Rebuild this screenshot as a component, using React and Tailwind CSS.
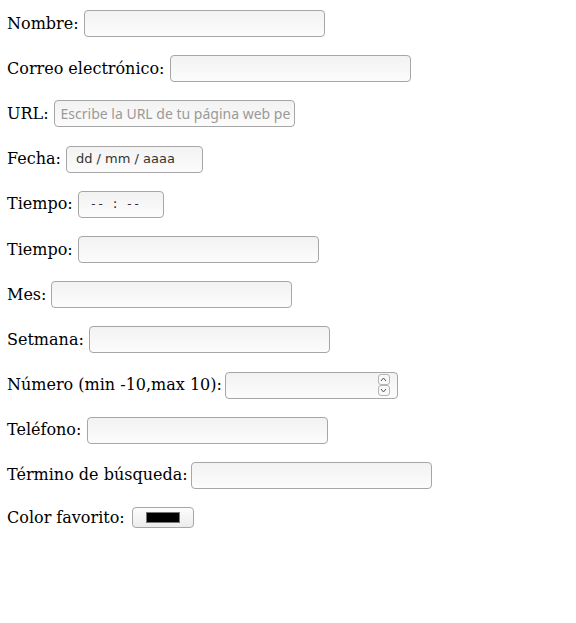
import React from "react";

const field =
  "h-[27px] w-[241px] rounded-[4px] border border-[#a6a6a6] bg-gradient-to-b from-[#f2f2f2] to-[#fcfcfc] outline-none";

const Row = ({ label, gap = "gap-[5px]", tall = "h-[29.2px]", children }) => (
  <div className={`flex ${tall} items-center ${gap}`}>
    <span>{label}</span>
    {children}
  </div>
);

const App = () => {
  return (
    <div className="flex flex-col gap-4 bg-white pl-[7px] pt-[9px] text-[16px] text-black font-['DejaVu_Serif',serif]">
      <Row label="Nombre:">
        <div className={field} />
      </Row>
      <Row label="Correo electrónico:">
        <div className={field} />
      </Row>
      <Row label="URL:">
        <div className={`${field} flex items-center overflow-hidden whitespace-nowrap pl-[6px] text-[14px] text-[#9a9a9a] font-['Noto_Sans',sans-serif]`}>
          Escribe la URL de tu página web pe
        </div>
      </Row>
      <Row label="Fecha:">
        <div className={`${field} !w-[137px] flex items-center pl-[9px] text-[13px] text-[#333] font-['DejaVu_Sans',sans-serif]`}>
          dd / mm / aaaa
        </div>
      </Row>
      <Row label="Tiempo:">
        <div className={`${field} !w-[86px] flex items-center pl-[11px] text-[12px] text-[#333] font-['DejaVu_Sans_Mono',monospace]`}>
          -- : --
        </div>
      </Row>
      <Row label="Tiempo:">
        <div className={field} />
      </Row>
      <Row label="Mes:">
        <div className={field} />
      </Row>
      <Row label="Setmana:">
        <div className={field} />
      </Row>
      <Row label="Número (min -10,max 10):" gap="gap-[3px]">
        <div className={`${field} !w-[173px] flex items-center justify-end pr-[7px]`}>
          <div className="flex flex-col">
            <div className="flex h-[11px] w-[12px] items-center justify-center rounded-[3px] border border-[#b5b5b5] bg-[#f8f8f8]">
              <svg width="7" height="5" viewBox="0 0 7 5">
                <path d="M1 4 L3.5 1 L6 4" fill="none" stroke="#555" strokeWidth="1" />
              </svg>
            </div>
            <div className="flex h-[11px] w-[12px] items-center justify-center rounded-[3px] border border-[#b5b5b5] bg-[#f8f8f8]">
              <svg width="7" height="5" viewBox="0 0 7 5">
                <path d="M1 1 L3.5 4 L6 1" fill="none" stroke="#555" strokeWidth="1" />
              </svg>
            </div>
          </div>
        </div>
      </Row>
      <Row label="Teléfono:" gap="gap-[6px]">
        <div className={field} />
      </Row>
      <Row label="Término de búsqueda:" gap="gap-[3px]">
        <div className={field} />
      </Row>
      <Row label="Color favorito:" gap="gap-[7px]" tall="h-[23px]">
        <div className="flex h-[21px] w-[62px] items-center justify-center rounded-[4px] border border-[#a6a6a6] bg-gradient-to-b from-[#fdfdfd] to-[#ececec]">
          <div className="h-[11px] w-[34px] border border-[#777] bg-black" />
        </div>
      </Row>
    </div>
  );
};

export default App;
